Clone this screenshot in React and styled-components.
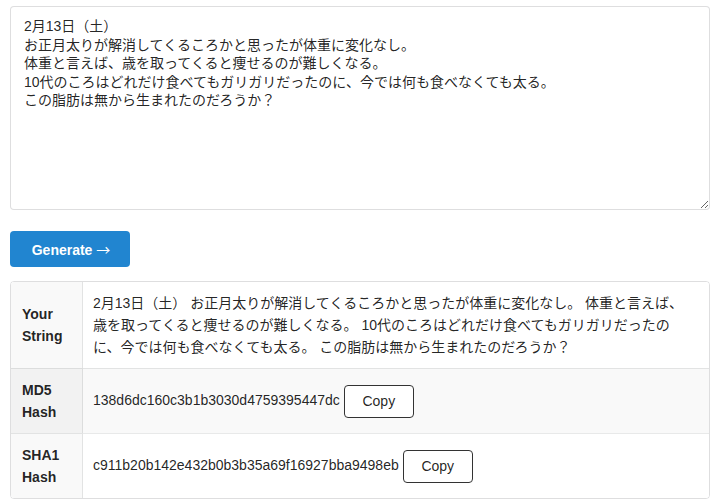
import React, { useState } from 'react';
import styled, { createGlobalStyle } from 'styled-components';

const GlobalStyle = createGlobalStyle`
  * { box-sizing: border-box; }
  body {
    margin: 0;
    background: #fff;
    font-family: "Liberation Sans", Arial, "Noto Sans CJK JP", sans-serif;
    font-size: 14px;
    color: rgba(0, 0, 0, 0.87);
  }
`;

const Page = styled.div`
  padding: 6px 4px 0 10px;
  width: 714px;
`;

const Input = styled.textarea`
  display: block;
  width: 700px;
  height: 204px;
  margin: 0;
  padding: 10px 13px;
  border: 1px solid rgba(34, 36, 38, 0.15);
  border-radius: 4px;
  font-family: "Liberation Sans", Arial, "Noto Sans CJK JP", sans-serif;
  font-size: 14px;
  line-height: 18.6px;
  color: rgba(0, 0, 0, 0.87);
  resize: vertical;
  outline: none;
`;

const GenerateButton = styled.button`
  display: block;
  margin: 21px 0 14px;
  width: 120px;
  height: 36px;
  padding: 0 0 0 2px;
  border: none;
  border-radius: 4px;
  background: #2185d0;
  color: #fff;
  font-family: "Liberation Sans", Arial, sans-serif;
  font-weight: bold;
  font-size: 14px;
  cursor: pointer;
`;

const Arrow = styled.span`
  font-family: "Noto Sans CJK JP", sans-serif;
  font-weight: normal;
  font-size: 14px;
`;

const Table = styled.table`
  width: 700px;
  border-collapse: separate;
  border-spacing: 0;
  border: 1px solid rgba(34, 36, 38, 0.15);
  border-radius: 4px;
  overflow: hidden;
`;

const Row = styled.tr`
  background: ${(p) => (p.$striped ? '#f9f9f9' : '#fff')};
`;

const Head = styled.td`
  width: 72px;
  padding: 10px 11px;
  font-weight: bold;
  line-height: 22px;
  vertical-align: middle;
  background: ${(p) => (p.$striped ? '#f2f2f2' : '#f9f9f9')};
  border-right: 1px solid rgba(34, 36, 38, 0.1);
  border-top: ${(p) => (p.$first ? 'none' : '1px solid rgba(34, 36, 38, 0.1)')};
`;

const Cell = styled.td`
  padding: 10px 20px 10px 10px;
  line-height: 22px;
  vertical-align: middle;
  border-top: ${(p) => (p.$first ? 'none' : '1px solid rgba(34, 36, 38, 0.1)')};
  font-family: "Liberation Sans", Arial, "Noto Sans CJK JP", sans-serif;
`;

const CopyButton = styled.button`
  margin-left: 4px;
  width: 70px;
  height: 33px;
  background: #fff;
  border: 1px solid #333;
  border-radius: 4px;
  font-family: "Liberation Sans", Arial, sans-serif;
  font-size: 14px;
  color: rgba(0, 0, 0, 0.87);
  vertical-align: middle;
  cursor: pointer;
`;

const initial = `2月13日（土）
お正月太りが解消してくるころかと思ったが体重に変化なし。
体重と言えば、歳を取ってくると痩せるのが難しくなる。
10代のころはどれだけ食べてもガリガリだったのに、今では何も食べなくても太る。
この脂肪は無から生まれたのだろうか？`;

const hashes = [
  { name: ['MD5', 'Hash'], value: '138d6dc160c3b1b3030d4759395447dc' },
  { name: ['SHA1', 'Hash'], value: 'c911b20b142e432b0b3b35a69f16927bba9498eb' },
];

const App = () => {
  const [text, setText] = useState(initial);
  const [shown, setShown] = useState(initial);

  return (
    <Page>
      <GlobalStyle />
      <Input value={text} onChange={(e) => setText(e.target.value)} />
      <GenerateButton onClick={() => setShown(text)}>
        Generate <Arrow>→</Arrow>
      </GenerateButton>
      <Table>
        <tbody>
          <Row>
            <Head $first>Your<br />String</Head>
            <Cell $first>{shown.split('\n').join(' ')}</Cell>
          </Row>
          {hashes.map((h, i) => (
            <Row key={h.value} $striped={i === 0}>
              <Head $striped={i === 0}>{h.name[0]}<br />{h.name[1]}</Head>
              <Cell>
                {h.value}
                <CopyButton onClick={() => navigator.clipboard && navigator.clipboard.writeText(h.value)}>Copy</CopyButton>
              </Cell>
            </Row>
          ))}
        </tbody>
      </Table>
    </Page>
  );
};

export default App;
